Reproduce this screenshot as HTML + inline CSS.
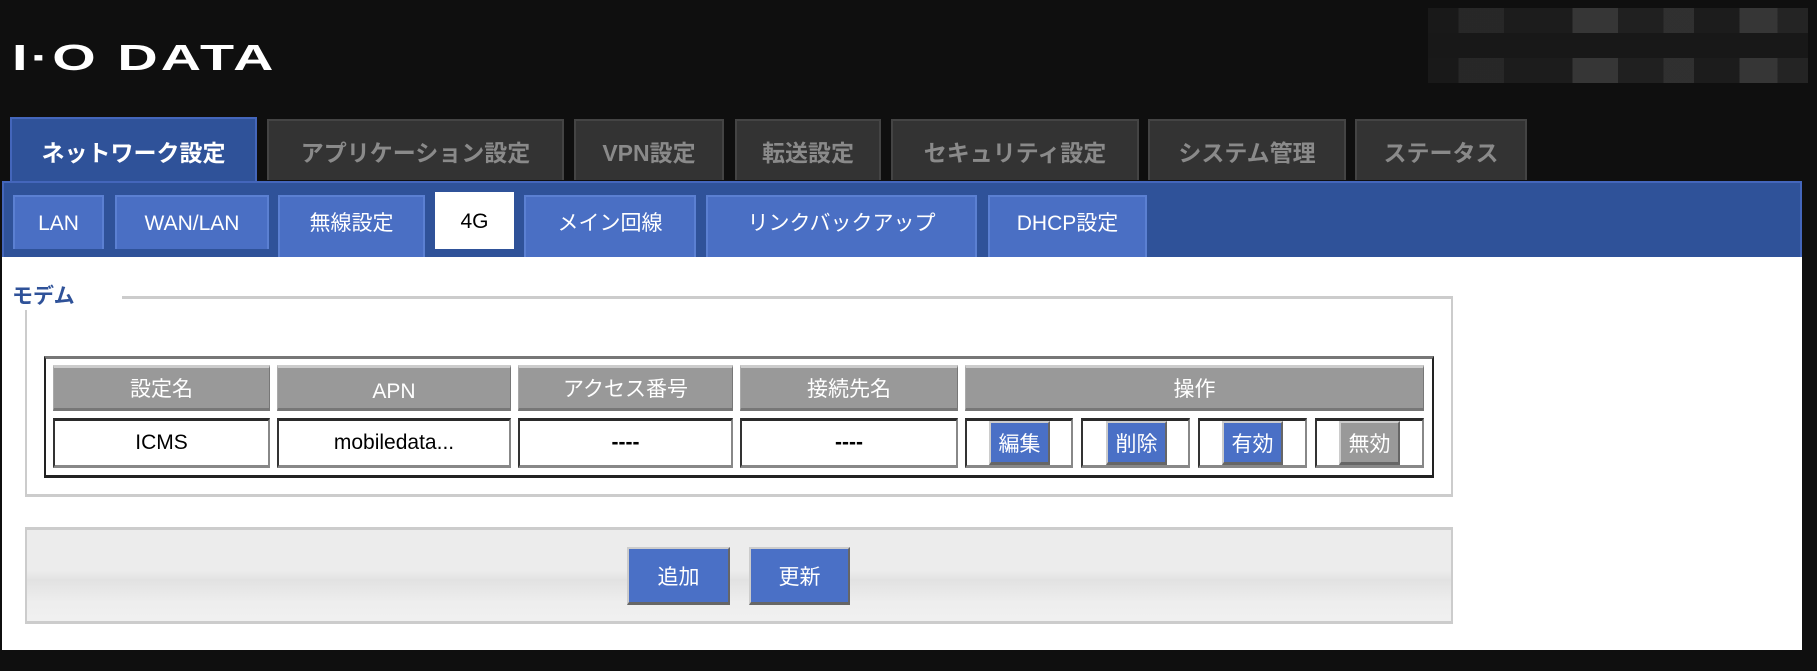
<!DOCTYPE html>
<html><head><meta charset="utf-8"><style>
*{margin:0;padding:0;box-sizing:border-box}
body{width:1817px;height:671px;background:#0f0f0f;position:relative;overflow:hidden;font-family:"Liberation Sans","Noto Sans CJK JP",sans-serif}
.a{position:absolute}
.c{display:flex;align-items:center;justify-content:center}
.mt{background:#333;border:2px solid #444;border-bottom:none;color:#8a8a8a;font-weight:bold;font-size:23px;top:119px;height:61px}
.mt.on{background:#2f5299;border-color:#4466bb;color:#fff;top:117px;height:65px}
.st{background:#4a6fc4;border:2px solid #5b80d2;border-bottom:none;color:#fff;font-size:21px;top:195px;height:54px;align-items:flex-start;padding-top:13px;line-height:28px}
.hd{background:#999;border-top:3px solid #ccc;border-bottom:3px solid #777;border-left:1px solid #aaa;border-right:1px solid #777;color:#fff;font-size:21px;top:365px;height:46px}
.td{background:#fff;border-top:3px solid #2a2a2a;border-left:2px solid #333;border-bottom:3px solid #888;border-right:2px solid #888;color:#000;font-size:21px;top:418px;height:50px}
.b{background:#4a70c6;border-top:2px solid #ccc;border-left:2px solid #ccc;border-bottom:3px solid #666;border-right:2px solid #666;color:#fff;font-size:21px}
</style></head><body>
<div class="a" style="left:12px;top:38px;color:#fff;font-weight:bold;font-size:36px;line-height:40px;letter-spacing:2px;font-family:'Liberation Sans',sans-serif;transform:scaleX(1.55);transform-origin:0 0">I·O DATA</div>
<div class="a" style="left:1428px;top:8px;width:380px;height:75px;background:
linear-gradient(90deg,#1a1a1a 0 8%,#2a2a2a 8% 20%,#1e1e1e 20% 38%,#3a3a3a 38% 50%,#222 50% 62%,#333 62% 70%,#1d1d1d 70% 82%,#3a3a3a 82% 92%,#262626 92%);opacity:.9"></div>
<div class="a" style="left:1428px;top:33px;width:380px;height:25px;background:#181818"></div>
<div class="a c mt on" style="left:10px;width:247px">ネットワーク設定</div>
<div class="a c mt" style="left:267px;width:297px">アプリケーション設定</div>
<div class="a c mt" style="left:574px;width:150px">VPN設定</div>
<div class="a c mt" style="left:735px;width:146px">転送設定</div>
<div class="a c mt" style="left:891px;width:248px">セキュリティ設定</div>
<div class="a c mt" style="left:1148px;width:198px">システム管理</div>
<div class="a c mt" style="left:1355px;width:172px">ステータス</div>
<div class="a" style="left:2px;top:181px;width:1800px;height:76px;background:#2f5299;border:2px solid #4466bb;border-bottom:none"></div>
<div class="a c st" style="left:13px;width:91px">LAN</div>
<div class="a c st" style="left:115px;width:154px">WAN/LAN</div>
<div class="a c st" style="left:278px;width:147px;height:62px">無線設定</div>
<div class="a c" style="left:435px;top:192px;width:79px;height:57px;background:#fff;font-size:21px;align-items:flex-start;padding-top:16px;line-height:28px">4G</div>
<div class="a c st" style="left:524px;width:172px;height:62px">メイン回線</div>
<div class="a c st" style="left:706px;width:271px;height:62px">リンクバックアップ</div>
<div class="a c st" style="left:988px;width:159px;height:62px">DHCP設定</div>
<div class="a" style="left:2px;top:257px;width:1800px;height:393px;background:#fff"></div>
<div class="a" style="left:25px;top:296px;width:1428px;height:201px;border:2px solid #ccc;border-top:3px solid #ccc;border-bottom:3px solid #ccc"></div>
<div class="a" style="left:10px;top:280px;width:112px;height:30px;background:#fff;color:#2f5299;font-weight:bold;font-size:21px;padding-left:2px">モデム</div>
<div class="a" style="left:44px;top:356px;width:1390px;height:122px;border:2px solid #222;border-top:3px solid #777;border-bottom:3px solid #222"></div>
<div class="a c hd" style="left:53px;width:217px">設定名</div>
<div class="a c hd" style="left:277px;width:234px;padding-top:8px">APN</div>
<div class="a c hd" style="left:518px;width:215px">アクセス番号</div>
<div class="a c hd" style="left:740px;width:218px">接続先名</div>
<div class="a c hd" style="left:965px;width:459px">操作</div>
<div class="a c td" style="left:53px;width:217px">ICMS</div>
<div class="a c td" style="left:277px;width:234px">mobiledata...</div>
<div class="a c td" style="left:518px;width:215px;font-weight:bold">----</div>
<div class="a c td" style="left:740px;width:218px;font-weight:bold">----</div>
<div class="a td" style="left:965px;width:108px"></div>
<div class="a td" style="left:1081px;width:109px"></div>
<div class="a td" style="left:1198px;width:109px"></div>
<div class="a td" style="left:1315px;width:109px"></div>
<div class="a c b" style="left:989px;top:421px;width:61px;height:44px">編集</div>
<div class="a c b" style="left:1106px;top:421px;width:61px;height:44px">削除</div>
<div class="a c b" style="left:1222px;top:421px;width:61px;height:44px">有効</div>
<div class="a c b" style="left:1339px;top:421px;width:61px;height:44px;background:#999">無効</div>
<div class="a" style="left:25px;top:527px;width:1428px;height:97px;border:2px solid #ccc;border-top:3px solid #ccc;border-bottom:3px solid #ccc;background:linear-gradient(#ececec 0 45%,#e2e2e2 55%,#eeeeee 80%,#f0f0f0)"></div>
<div class="a c b" style="left:627px;top:547px;width:103px;height:58px">追加</div>
<div class="a c b" style="left:749px;top:547px;width:101px;height:58px">更新</div>
</body></html>
